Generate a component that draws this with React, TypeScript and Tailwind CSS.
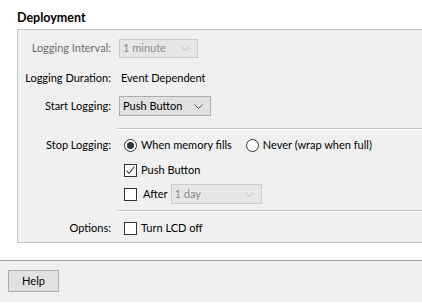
import React from "react";

function Chevron({ color = "#606060" }: { color?: string }) {
  return (
    <svg width="9" height="5" viewBox="0 0 9 5" className="shrink-0">
      <path d="M0.5 0.5 L4.5 4.5 L8.5 0.5" fill="none" stroke={color} strokeWidth="1" />
    </svg>
  );
}

function Select({
  value,
  width,
  disabled,
  h = "h-[20px]",
}: {
  value: string;
  width: string;
  disabled?: boolean;
  h?: string;
}) {
  return (
    <div
      className={`flex items-center justify-between ${width} ${h} pl-[3px] pr-[7px] border ${
        disabled
          ? "bg-[#e6e6e6] border-[#cccccc] text-[#8a8a8a]"
          : "bg-[#e1e1e1] border-[#adadad] text-black"
      }`}
    >
      <span>{value}</span>
      <Chevron color={disabled ? "#bcbcbc" : "#555555"} />
    </div>
  );
}

function Checkbox({ checked }: { checked?: boolean }) {
  return (
    <div className="w-[13px] h-[13px] border border-[#333333] bg-white flex items-center justify-center shrink-0">
      {checked && (
        <svg width="11" height="11" viewBox="0 0 11 11">
          <path d="M1.5 5.5 L4 8.5 L9.5 1.5" fill="none" stroke="#333333" strokeWidth="1.1" />
        </svg>
      )}
    </div>
  );
}

function Radio({ checked }: { checked?: boolean }) {
  return (
    <div className="w-[13px] h-[13px] rounded-full border border-[#333333] bg-white flex items-center justify-center shrink-0">
      {checked && <div className="w-[7px] h-[7px] rounded-full bg-[#333333]" />}
    </div>
  );
}

function Row({
  label,
  dim,
  children,
  className = "",
}: {
  label?: string;
  dim?: boolean;
  children: React.ReactNode;
  className?: string;
}) {
  return (
    <div className={`flex items-center h-[20px] ${className}`}>
      <div className={`w-[93px] text-right shrink-0 whitespace-nowrap ${dim ? "text-[#6d6d6d]" : ""}`}>{label}</div>
      <div className="flex items-center ml-[8px] whitespace-nowrap">{children}</div>
    </div>
  );
}

function Separator({ className = "" }: { className?: string }) {
  return <div className={`ml-[99px] h-[2px] border-t border-[#c2c2c2] border-b border-b-white ${className}`} />;
}

export default function App() {
  return (
    <div
      className="w-[422px] h-[303px] bg-white text-[11px] leading-[16px] text-black overflow-hidden"
      style={{ fontFamily: 'Lato, sans-serif' }}
    >
      <div className="h-[29px] pl-[17px] pt-[10px] font-bold text-[12.5px]">Deployment</div>
      <div className="ml-[17px] w-[420px] h-[214px] bg-[#f0f0f0] border border-r-0 border-[#c6c6c6]">
        <Row label="Logging Interval:" dim className="mt-[8px]">
          <Select value="1 minute" width="w-[79px]" disabled h="h-[19px]" />
        </Row>
        <Row label="Logging Duration:" className="mt-[10px]">
          <span className="ml-[2px]">Event Dependent</span>
        </Row>
        <Row label="Start Logging:" className="mt-[8px]">
          <Select value="Push Button" width="w-[92px]" />
        </Row>
        <Separator className="mt-[12px]" />
        <Row label="Stop Logging:" className="mt-[5px]">
          <div className="flex items-center ml-[5px]">
            <Radio checked />
            <span className="ml-[4px]">When memory fills</span>
            <div className="ml-[14px] flex items-center">
              <Radio />
              <span className="ml-[4px]">Never (wrap when full)</span>
            </div>
          </div>
        </Row>
        <Row className="mt-[5px]">
          <div className="flex items-center ml-[5px]">
            <Checkbox checked />
            <span className="ml-[4px]">Push Button</span>
          </div>
        </Row>
        <Row className="mt-[4px]">
          <div className="flex items-center ml-[5px]">
            <Checkbox />
            <span className="ml-[6px] mr-[3px]">After</span>
            <Select value="1 day" width="w-[91px]" disabled />
          </div>
        </Row>
        <Separator className="mt-[6px]" />
        <Row label="Options:" className="mt-[6px]">
          <div className="flex items-center ml-[5px]">
            <Checkbox />
            <span className="ml-[4px]">Turn LCD off</span>
          </div>
        </Row>
      </div>
      <div className="mt-[17px] h-[42px] bg-[#f0f0f0] border-t border-[#a0a0a0] pt-[9px] pl-[8px]">
        <button className="w-[51px] h-[22px] bg-[#e1e1e1] border border-[#adadad] text-[11px]">Help</button>
      </div>
    </div>
  );
}
